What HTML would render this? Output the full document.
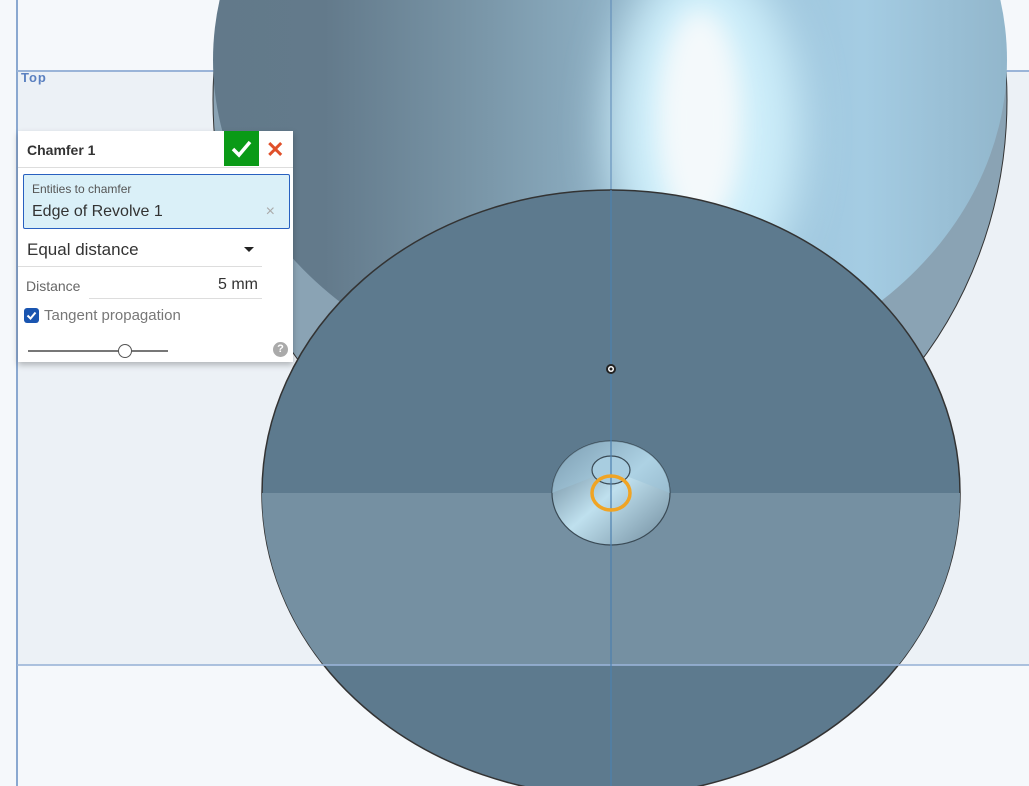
<!DOCTYPE html>
<html><head><meta charset="utf-8"><style>
*{margin:0;padding:0;box-sizing:border-box}
body{width:1029px;height:786px;overflow:hidden;background:#f5f8fb;font-family:"Liberation Sans",sans-serif;position:relative}
svg{position:absolute;left:0;top:0}
.dlg{position:absolute;left:18px;top:131px;width:275px;height:231px;background:#fff;box-shadow:0 3px 6px rgba(0,0,0,.25)}
.hdr{height:37px;border-bottom:1px solid #ddd;position:relative}
.hdr .t{position:absolute;left:9px;top:11px;font-size:14px;font-weight:bold;color:#333}
.ok{position:absolute;left:206px;top:0;width:35px;height:35px;background:#0a9a17}
.x{position:absolute;left:248px;top:6px;font-size:22px;color:#e0502a;font-weight:bold}
.ent{position:absolute;left:5px;top:43px;width:267px;height:55px;background:#daf0f8;border:1px solid #2860c0;border-radius:2px}
.ent .l{position:absolute;left:8px;top:7px;font-size:12px;color:#555}
.ent .v{position:absolute;left:8px;top:28px;font-size:16px;color:#333}
.ent .c{position:absolute;right:14px;top:28px;font-size:16px;color:#aaa}
.sel{position:absolute;left:9px;top:109px;font-size:17px;color:#333}
.line{position:absolute;height:1px;background:#ddd}
</style></head><body>
<svg width="1029" height="786">
<defs>
<linearGradient id="sg" x1="0" y1="0" x2="1" y2="0">
<stop offset="0" stop-color="#62798a"/><stop offset="0.15" stop-color="#637a8b"/><stop offset="0.35" stop-color="#7b98aa"/><stop offset="0.6" stop-color="#9cc2d8"/><stop offset="0.8" stop-color="#a4cce3"/><stop offset="1" stop-color="#8fb3c8"/>
</linearGradient>
<filter id="bl" x="-50%" y="-50%" width="200%" height="200%"><feGaussianBlur stdDeviation="22"/></filter>
<filter id="bl2" x="-50%" y="-50%" width="200%" height="200%"><feGaussianBlur stdDeviation="12"/></filter>
<linearGradient id="cs" x1="0" y1="0" x2="1" y2="1"><stop offset="0" stop-color="#5b7588"/><stop offset="0.5" stop-color="#bfe0ee"/><stop offset="1" stop-color="#6f8a9c"/></linearGradient>
<clipPath id="dc"><ellipse cx="611" cy="493" rx="349" ry="303"/></clipPath>
<clipPath id="sc"><ellipse cx="610" cy="60" rx="397" ry="330"/></clipPath>
</defs>
<rect x="17" y="71" width="1012" height="594" fill="#ecf1f6"/>
<line x1="17" y1="0" x2="17" y2="786" stroke="#8aa8d0" stroke-width="2"/>
<line x1="17" y1="71" x2="1029" y2="71" stroke="#9ab4d8" stroke-width="2"/>
<text x="21" y="82" font-size="13" font-weight="bold" fill="#5a80c0" font-family="Liberation Sans" letter-spacing="1">Top</text>
<ellipse cx="610" cy="100" rx="397" ry="420" fill="#8aa3b4" stroke="#333" stroke-width="1"/>
<g clip-path="url(#sc)">
<rect x="200" y="-300" width="830" height="700" fill="url(#sg)"/>
<ellipse cx="705" cy="130" rx="95" ry="170" fill="#cdeefa" filter="url(#bl)"/>
<ellipse cx="700" cy="120" rx="42" ry="110" fill="#f4f9fb" filter="url(#bl2)"/>
</g>
<line x1="611" y1="0" x2="611" y2="190" stroke="#5a88b8" stroke-width="1"/>
<ellipse cx="611" cy="493" rx="349" ry="303" fill="#5d7a8e" stroke="#333" stroke-width="1.5"/>
<rect x="250" y="493" width="720" height="172" fill="#7590a2" clip-path="url(#dc)"/>
<line x1="17" y1="665" x2="1029" y2="665" stroke="#9ab4d8" stroke-width="2" opacity=".8"/>
<ellipse cx="611" cy="493" rx="59" ry="52" fill="url(#cs)" stroke="#3a4a55" stroke-width="1.2"/>
<path d="M552 493 L611 470 L670 493 A59 52 0 0 0 552 493Z" fill="#9cc4da" opacity=".5"/>
<ellipse cx="611" cy="470" rx="19" ry="14" fill="#a8cde0" stroke="#3a4a55" stroke-width="1.2"/>
<line x1="611" y1="190" x2="611" y2="786" stroke="#4c80b0" stroke-width="1.2"/>
<circle cx="611" cy="369" r="5" fill="#222"/><circle cx="611" cy="369" r="3" fill="#fff"/><circle cx="611" cy="369" r="1.5" fill="#222"/>
<ellipse cx="611" cy="493" rx="19" ry="17" fill="none" stroke="#f0a424" stroke-width="3.5"/>
</svg>
<div class="dlg">
<div class="hdr"><div class="t">Chamfer 1</div><div class="ok"><svg width="35" height="35" style="position:static"><path d="M9 18 L15 24 L26 11" stroke="#fff" stroke-width="3.5" fill="none"/></svg></div><div class="x">✕</div></div>
<div class="ent"><div class="l">Entities to chamfer</div><div class="v">Edge of Revolve 1</div><div class="c">×</div></div>
<div class="sel">Equal distance</div>
<svg width="12" height="8" style="left:225px;top:115px"><path d="M1 1 L11 1 L6 6Z" fill="#222"/></svg>
<div class="line" style="left:0;top:135px;width:244px"></div>
<div style="position:absolute;left:8px;top:147px;font-size:14px;color:#666">Distance</div>
<div style="position:absolute;right:35px;top:145px;font-size:16px;color:#333">5 mm</div>
<div class="line" style="left:71px;top:167px;width:173px"></div>
<div style="position:absolute;left:6px;top:177px;width:15px;height:15px;background:#1a55b0;border-radius:3px"><svg width="15" height="15" style="position:static"><path d="M3.5 7.5 L6.5 10.5 L11.5 4.5" stroke="#fff" stroke-width="2" fill="none"/></svg></div>
<div style="position:absolute;left:26px;top:176px;font-size:15px;color:#777">Tangent propagation</div>
<div style="position:absolute;left:10px;top:219px;width:140px;height:2px;background:#777"></div>
<div style="position:absolute;left:100px;top:213px;width:14px;height:14px;border:1.5px solid #555;border-radius:50%;background:#fff"></div>
<div style="position:absolute;left:255px;top:211px;width:15px;height:15px;border-radius:50%;background:#aaa;color:#fff;font-size:11px;font-weight:bold;text-align:center;line-height:15px">?</div>
</div>
</body></html>
